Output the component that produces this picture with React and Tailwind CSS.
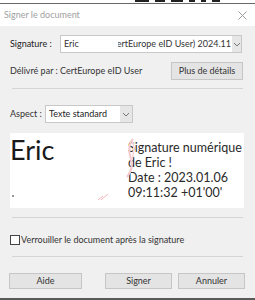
import React from "react";

const font = { fontFamily: 'Lato, "Noto Sans", sans-serif' };

function Chevron() {
  return (
    <svg width="8" height="5" viewBox="0 0 8 5" fill="none">
      <path d="M1 1l3 3 3-3" stroke="#777" strokeWidth="1" />
    </svg>
  );
}

function Btn({ children, className }) {
  return (
    <div
      className={
        "flex items-center justify-center whitespace-nowrap border border-[#c6c6c6] bg-[#e4e4e4] text-[9px] text-[#333] " +
        className
      }
    >
      {children}
    </div>
  );
}

export default function App() {
  return (
    <div
      className="w-[255px] h-[300px] bg-[#f0f0f0] flex flex-col overflow-hidden whitespace-nowrap font-['Lato',sans-serif]"
      style={font}
    >
      <div className="h-[3px] bg-white overflow-hidden flex pl-[135px] gap-[6px]">
        <div className="w-[14px] h-[2px] bg-[#222]" />
        <div className="w-[10px] h-[2px] bg-[#222]" />
        <div className="w-[12px] h-[2px] bg-[#222]" />
        <div className="w-[6px] h-[2px] bg-[#222]" />
        <div className="w-[5px] h-[2px] bg-[#222]" />
        <div className="w-[8px] h-[2px] bg-[#222]" />
      </div>
      <div className="h-px bg-[#6a6a6a]" />
      <div className="h-[22px] bg-white flex items-center justify-between pl-[4px] pr-[8px]">
        <span className="text-[9px] text-[#a0a0a0]">Signer le document</span>
        <svg width="9" height="9" viewBox="0 0 9 9">
          <path d="M0.5 0.5l8 8M8.5 0.5l-8 8" stroke="#9a9a9a" strokeWidth="1" />
        </svg>
      </div>
      <div className="flex-1 flex flex-col px-[10px] pt-[9px]">
        <div className="flex items-center h-[18px]">
          <span className="text-[9px] text-[#222] w-[50px]">Signature :</span>
          <div className="flex-1 min-w-0 h-[18px] mr-[3px] bg-white border border-[#c8c8c8] flex items-center">
            <span className="text-[9px] text-[#333] pl-[3px] w-[57px] shrink-0">Eric</span>
            <span className="flex-1 min-w-0 text-[9px] text-[#333] overflow-hidden flex justify-end">
              <span className="shrink-0">CertEurope eID User) 2024.11</span>
            </span>
            <div className="w-[9px] shrink-0 h-full bg-[#e6e6e6] flex items-center justify-center ml-[1px]">
              <Chevron />
            </div>
          </div>
        </div>
        <div className="flex items-center justify-between mt-[9px] h-[18px]">
          <span className="text-[9px] text-[#333]">Délivré par : CertEurope eID User</span>
          <Btn className="w-[72px] h-[18px] mr-[2px]">Plus de détails</Btn>
        </div>
        <div className="h-px bg-[#d5d5d5] mt-[8px] ml-[2px] mr-[2px]" />
        <div className="flex items-center mt-[16px] h-[18px]">
          <span className="text-[9px] text-[#333] w-[35px]">Aspect :</span>
          <div className="w-[88px] h-[18px] bg-white border border-[#c8c8c8] flex items-center">
            <span className="flex-1 text-[9px] text-[#222] pl-[3px]">Texte standard</span>
            <div className="w-[12px] h-full bg-[#e6e6e6] flex items-center justify-center">
              <Chevron />
            </div>
          </div>
        </div>
        <div className="relative mt-[10px] h-[75px] mr-[1px] bg-white flex">
          <div className="w-[118px] pt-[2px] pl-[0px] text-[27px] leading-[30px] text-[#1a1a1a]">Eric</div>
          <div className="absolute left-[105px] top-[0px]">
            <svg width="30" height="75" viewBox="0 0 30 75" fill="none">
              <path d="M18 6 C14 10 13 18 16 26 C18 33 17 38 12 44" stroke="#f3c9cc" strokeWidth="2" />
              <path d="M17 8 C20 12 19 20 16 30" stroke="#f6d6d8" strokeWidth="1.5" />
            </svg>
          </div>
          <div className="absolute left-[86px] top-[58px]">
            <svg width="16" height="10" viewBox="0 0 16 10" fill="none">
              <path d="M2 9 l5 -4 M5 9 l7 -6" stroke="#f2b5ba" strokeWidth="1" />
            </svg>
          </div>
          <div className="absolute left-[2px] top-[62px] w-[2px] h-[2px] bg-[#999]" />
          <div className="flex flex-col pt-[7px] text-[12.5px] leading-[15px] text-[#2a2a2a]">
            <span>Signature numérique</span>
            <span>de Eric !</span>
            <span>Date : 2023.01.06</span>
            <span>09:11:32 +01'00'</span>
          </div>
        </div>
        <div className="h-px bg-[#d5d5d5] mt-[9px] ml-[2px] mr-[2px]" />
        <div className="flex items-center mt-[16px] h-[11px]">
          <div className="w-[10px] h-[10px] border border-[#444] bg-white" />
          <span className="text-[9px] text-[#333] ml-[1px]">Verrouiller le document après la signature</span>
        </div>
        <div className="h-px bg-[#d5d5d5] mt-[11px] ml-[2px] mr-[2px]" />
        <div className="flex items-center mt-[16px]">
          <Btn className="w-[73px] h-[16px] ml-[-1px]">Aide</Btn>
          <div className="flex-1" />
          <Btn className="w-[67px] h-[16px]">Signer</Btn>
          <Btn className="w-[67px] h-[16px] ml-[6px]">Annuler</Btn>
        </div>
      </div>
      <div className="h-[2px] bg-[#5a5a5a]" />
    </div>
  );
}
